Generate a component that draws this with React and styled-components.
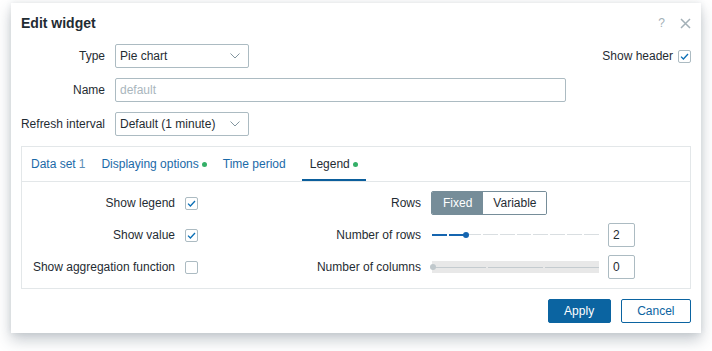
import React from "react";
import styled, { createGlobalStyle } from "styled-components";

const GlobalStyle = createGlobalStyle`
  html, body {
    margin: 0;
    padding: 0;
    background: #ffffff;
  }
  body {
    font-family: "Liberation Sans", Arial, sans-serif;
    font-size: 12px;
    color: #1f2c33;
  }
`;

const Page = styled.div`
  box-sizing: border-box;
  width: 712px;
  height: 351px;
  padding: 3px 11px 18px;
  background: #fff;
`;

const Dialog = styled.div`
  box-sizing: border-box;
  width: 690px;
  height: 330px;
  padding: 10px 10px 0;
  background: #fff;
  box-shadow: 0 7px 14px rgba(50, 70, 85, 0.28), 0 0 6px rgba(50, 70, 85, 0.1);
  display: flex;
  flex-direction: column;
`;

const Header = styled.div`
  display: flex;
  align-items: center;
  height: 20px;
  margin-bottom: 11px;
`;

const Title = styled.h4`
  margin: 0;
  flex: 1;
  font-size: 14px;
  font-weight: bold;
  line-height: 20px;
  color: #1f2c33;
`;

const HeaderIcons = styled.div`
  display: flex;
  align-items: center;
  gap: 15px;
  color: #a3b0b7;
  font-size: 12px;
`;

const Form = styled.div`
  display: grid;
  grid-template-columns: 84px 1fr;
  column-gap: 10px;
  row-gap: 10px;
`;

const Label = styled.label`
  display: flex;
  align-items: center;
  justify-content: flex-end;
  height: 24px;
  white-space: nowrap;
`;

const Field = styled.div`
  display: flex;
  align-items: center;
  height: 24px;
`;

const SelectBox = styled.div`
  box-sizing: border-box;
  width: ${(p) => p.$width}px;
  height: 24px;
  border: 1px solid #acbbc2;
  border-radius: 2px;
  padding: 0 8px 0 4px;
  display: flex;
  align-items: center;
  justify-content: space-between;
  background: #fff;
`;

const TextInput = styled.div`
  box-sizing: border-box;
  width: ${(p) => p.$width}px;
  height: 24px;
  border: 1px solid #acbbc2;
  border-radius: 2px;
  padding: 0 4px;
  display: flex;
  align-items: center;
  color: ${(p) => (p.$placeholder ? "#a9b6bd" : "#1f2c33")};
  background: #fff;
`;

const HeaderToggle = styled.div`
  margin-left: auto;
  display: flex;
  align-items: center;
  gap: 5px;
`;

const Box = styled.span`
  box-sizing: border-box;
  width: 13px;
  height: 13px;
  border: 1px solid #acbbc2;
  border-radius: 2px;
  background: #fff;
  display: inline-flex;
  align-items: center;
  justify-content: center;
`;

const Tabs = styled.div`
  margin-top: 10px;
  border: 1px solid #e3e7e9;
`;

const TabBar = styled.div`
  display: flex;
  height: 34px;
  padding-left: 1px;
  border-bottom: 1px solid #e3e7e9;
`;

const Tab = styled.div`
  display: flex;
  align-items: center;
  padding: 0 8px;
  height: 34px;
  box-sizing: border-box;
  color: ${(p) => (p.$active ? "#1f2c33" : "#1b6aa8")};
  box-shadow: ${(p) => (p.$active ? "inset 0 -2px 0 #0b5e9c" : "none")};
  white-space: nowrap;
`;

const Count = styled.span`
  color: #5c8db5;
  margin-left: 3px;
`;

const Dot = styled.span`
  width: 5px;
  height: 5px;
  border-radius: 50%;
  background: ${(p) => (p.$hidden ? "transparent" : "#34af67")};
  margin-left: 3px;
  margin-top: 1px;
`;

const TabBody = styled.div`
  display: grid;
  grid-template-columns: 142px 13px 213px 204px;
  grid-auto-rows: 24px;
  column-gap: 10px;
  row-gap: 8px;
  padding: 9px 11px;
  align-items: center;
`;

const Cell = styled.div`
  display: flex;
  align-items: center;
  height: 24px;
`;

const Segmented = styled.div`
  display: flex;
  height: 24px;
  box-sizing: border-box;
  border: 1px solid #768d99;
  border-radius: 2px;
  overflow: hidden;
`;

const Segment = styled.div`
  display: flex;
  align-items: center;
  padding: 0 ${(p) => p.$pad}px;
  background: ${(p) => (p.$active ? "#768d99" : "#fff")};
  color: ${(p) => (p.$active ? "#fff" : "#1f2c33")};
`;

const SliderRow = styled.div`
  display: flex;
  align-items: center;
  gap: 9px;
  width: 100%;
`;

const Slider = styled.div`
  position: relative;
  width: 168px;
  height: ${(p) => (p.$disabled ? 12 : 24)}px;
  margin-left: 1px;
  display: flex;
  align-items: center;
  background: ${(p) => (p.$disabled ? "#e8e8e8" : "transparent")};
`;

const Track = styled.div`
  display: flex;
  gap: 2px;
  width: 100%;
`;

const Step = styled.span`
  flex: 1;
  height: ${(p) => (p.$on ? 2 : 1)}px;
  background: ${(p) => (p.$on ? "#1565b0" : p.$disabled ? "#c4cbcf" : "#d9dee1")};
`;

const Thumb = styled.span`
  position: absolute;
  top: 50%;
  width: 6px;
  height: 6px;
  margin: -3px 0 0 -2px;
  border-radius: 50%;
  background: ${(p) => (p.$disabled ? "#c0c8cc" : "#1565b0")};
`;

const NumberBox = styled(TextInput)`
  width: 27px;
`;

const Footer = styled.div`
  display: flex;
  justify-content: flex-end;
  gap: 10px;
  margin-top: 10px;
`;

const Button = styled.button`
  box-sizing: border-box;
  height: 24px;
  padding: 0 15.5px;
  border-radius: 2px;
  border: 1px solid #0b64a1;
  background: ${(p) => (p.$primary ? "#0b64a1" : "#fff")};
  color: ${(p) => (p.$primary ? "#fff" : "#0b64a1")};
  font-family: inherit;
  font-size: 12px;
  line-height: 22px;
`;

const Chevron = () => (
  <svg width="10" height="6" viewBox="0 0 10 6">
    <path d="M0.5 0.5 L5 5 L9.5 0.5" fill="none" stroke="#8396a0" strokeWidth="1" />
  </svg>
);

const Check = ({ checked }) => (
  <Box>
    {checked && (
      <svg width="11" height="11" viewBox="0 0 11 11">
        <path d="M2 5.6 L4.4 8 L9 3" fill="none" stroke="#0b6fb6" strokeWidth="1.3" />
      </svg>
    )}
  </Box>
);

const Close = () => (
  <svg width="11" height="11" viewBox="0 0 11 11">
    <path d="M1 1 L10 10 M10 1 L1 10" stroke="#a3b0b7" strokeWidth="1.5" />
  </svg>
);

function RangeSlider({ value, max, disabled }) {
  return (
    <Slider $disabled={disabled}>
      <Track>
        {Array.from({ length: max }, (_, i) => (
          <Step key={i} $on={!disabled && i < value} $disabled={disabled} />
        ))}
      </Track>
      <Thumb $disabled={disabled} style={{ left: `${(value / max) * 100}%` }} />
    </Slider>
  );
}

export default function App() {
  return (
    <Page>
      <GlobalStyle />
      <Dialog>
        <Header>
          <Title>Edit widget</Title>
          <HeaderIcons>
            <span>?</span>
            <Close />
          </HeaderIcons>
        </Header>

        <Form>
          <Label>Type</Label>
          <Field>
            <SelectBox $width={134}>
              Pie chart
              <Chevron />
            </SelectBox>
            <HeaderToggle>
              Show header
              <Check checked />
            </HeaderToggle>
          </Field>

          <Label>Name</Label>
          <Field>
            <TextInput $width={451} $placeholder>
              default
            </TextInput>
          </Field>

          <Label>Refresh interval</Label>
          <Field>
            <SelectBox $width={134}>
              Default (1 minute)
              <Chevron />
            </SelectBox>
          </Field>
        </Form>

        <Tabs>
          <TabBar>
            <Tab>
              Data set<Count>1</Count>
            </Tab>
            <Tab>
              Displaying options<Dot />
            </Tab>
            <Tab>
              Time period<Dot $hidden />
            </Tab>
            <Tab $active>
              Legend<Dot />
            </Tab>
          </TabBar>

          <TabBody>
            <Label>Show legend</Label>
            <Check checked />
            <Label>Rows</Label>
            <Cell>
              <Segmented>
                <Segment $active $pad={11}>Fixed</Segment>
                <Segment $pad={10}>Variable</Segment>
              </Segmented>
            </Cell>

            <Label>Show value</Label>
            <Check checked />
            <Label>Number of rows</Label>
            <Cell>
              <SliderRow>
                <RangeSlider value={2} max={10} />
                <NumberBox>2</NumberBox>
              </SliderRow>
            </Cell>

            <Label>Show aggregation function</Label>
            <Check />
            <Label>Number of columns</Label>
            <Cell>
              <SliderRow>
                <RangeSlider value={0} max={3} disabled />
                <NumberBox>0</NumberBox>
              </SliderRow>
            </Cell>
          </TabBody>
        </Tabs>

        <Footer>
          <Button $primary>Apply</Button>
          <Button>Cancel</Button>
        </Footer>
      </Dialog>
    </Page>
  );
}
